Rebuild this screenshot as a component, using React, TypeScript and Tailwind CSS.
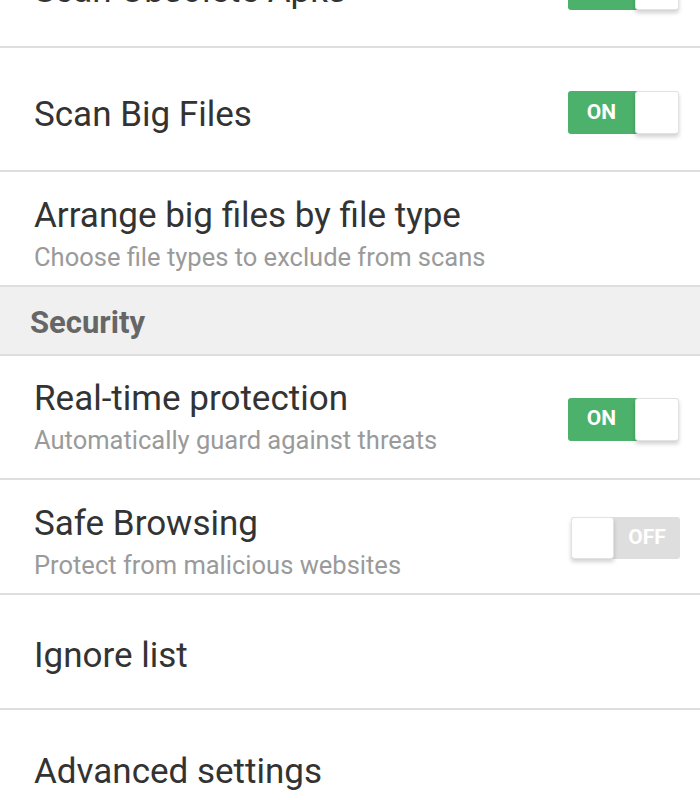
import React from "react";

type Row = {
  title: string;
  subtitle?: string;
  toggle?: "on" | "off";
  height: string;
  textPad?: string;
  togglePad?: string;
};

const OnToggle = ({ className = "" }: { className?: string }) => (
  <div className={`flex h-[43px] w-[110px] rounded-[3px] bg-[#4cb16b] ${className}`}>
    <div className="flex flex-1 items-center justify-center text-[21px] font-bold text-white">ON</div>
    <div className="-mr-[1px] h-[43px] w-[44px] rounded-[3px] border border-[#e2e2e2] bg-white shadow-[0_3px_4px_rgba(0,0,0,0.18)]" />
  </div>
);

const OffToggle = ({ className = "" }: { className?: string }) => (
  <div className={`-mr-[2px] flex h-[42px] w-[109px] rounded-[3px] bg-[#dedede] ${className}`}>
    <div className="h-[42px] w-[43px] rounded-[3px] border border-[#e2e2e2] bg-white shadow-[0_3px_4px_rgba(0,0,0,0.18)]" />
    <div className="flex flex-1 items-center justify-center text-[21px] font-bold text-white">OFF</div>
  </div>
);

const SettingRow = ({ row }: { row: Row }) => (
  <div
    className={`flex items-center justify-between border-b-2 border-[#dedede] pl-[34px] pr-[22px] ${row.height}`}
  >
    <div className={`flex flex-col ${row.textPad ?? ""}`}>
      <div className="text-[35px] leading-[42px] text-[#333333]">{row.title}</div>
      {row.subtitle && (
        <div className="mt-[4px] text-[25.5px] leading-[32px] text-[#9a9a9a]">{row.subtitle}</div>
      )}
    </div>
    {row.toggle === "on" && <OnToggle className={row.togglePad} />}
    {row.toggle === "off" && <OffToggle className={row.togglePad} />}
  </div>
);

export default function App() {
  const storage: Row[] = [
    { title: "Scan Obsolete Apks", toggle: "on", height: "h-[124px] pt-[7px]", textPad: "pt-[4px]" },
    { title: "Scan Big Files", toggle: "on", height: "h-[124px] pt-[7px]", textPad: "pt-[4px]" },
    {
      title: "Arrange big files by file type",
      subtitle: "Choose file types to exclude from scans",
      height: "h-[115px] pt-[10px]",
    },
  ];
  const security: Row[] = [
    {
      title: "Real-time protection",
      subtitle: "Automatically guard against threats",
      toggle: "on",
      height: "h-[124px]",
      togglePad: "mt-[4px]",
    },
    {
      title: "Safe Browsing",
      subtitle: "Protect from malicious websites",
      toggle: "off",
      height: "h-[115px] pt-[6px]",
      textPad: "pt-[4px]",
      togglePad: "mb-[4px]",
    },
    { title: "Ignore list", height: "h-[115px] pt-[9px]" },
    { title: "Advanced settings", height: "h-[124px] pt-[1px]" },
  ];

  return (
    <div className="h-[800px] w-[700px] overflow-hidden bg-white font-['Roboto',sans-serif]">
      <div className="-mt-[76px]">
        {storage.map((r) => (
          <SettingRow key={r.title} row={r} />
        ))}
        <div className="flex h-[69px] items-center border-b-2 border-[#dedede] bg-[#f0f0f0] pl-[30px] pt-[6px] text-[31px] font-bold text-[#666666]">
          Security
        </div>
        {security.map((r) => (
          <SettingRow key={r.title} row={r} />
        ))}
      </div>
    </div>
  );
}
